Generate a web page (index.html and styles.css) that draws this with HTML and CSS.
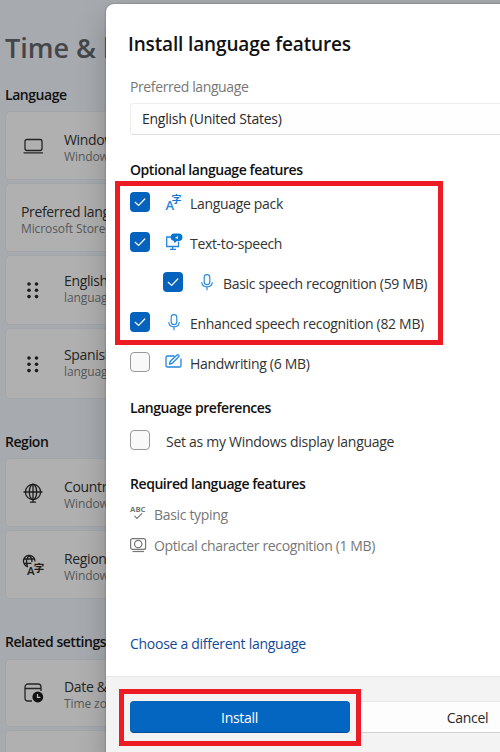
FILE: index.html
```html
<!DOCTYPE html>
<html lang="en">
<head>
<meta charset="utf-8">
<title>Install language features</title>
<link rel="stylesheet" href="styles.css">
</head>
<body>
<svg class="defs" width="0" height="0">
  <defs>
    <symbol id="check" viewBox="0 0 20 20"><path d="M5.2 10.3 8.6 13.5 14.8 7" fill="none" stroke="#fff" stroke-width="1.2" stroke-linecap="round"/></symbol>
    <symbol id="mic" viewBox="0 0 16 18"><g fill="none" stroke="#2a8be0" stroke-width="1.2" stroke-linecap="round"><rect x="5.2" y="1.6" width="5.6" height="10" rx="2.8"/><path d="M2.8 9.5c.3 2.800 2.500 4.300 5.200 4.300s4.900-1.500 5.200-4.300M8 14v2.800"/></g></symbol>
    <symbol id="dots" viewBox="0 0 14 18"><g fill="#1c1c1c"><circle cx="3" cy="3" r="1.800"/><circle cx="10.500" cy="3" r="1.800"/><circle cx="3" cy="9.300" r="1.800"/><circle cx="10.500" cy="9.300" r="1.800"/><circle cx="3" cy="15.600" r="1.800"/><circle cx="10.500" cy="15.600" r="1.800"/></g></symbol>
  </defs>
</svg>
<div class="window">
  <main class="settings">
    <h1 class="page-title">Time &amp; l</h1>
    <h2 class="section">Language</h2>
    <div class="card c1">
      <svg class="card-icon" viewBox="0 0 22 22"><g fill="none" stroke="#242424" stroke-width="1.300" stroke-linecap="round"><rect x="3" y="4.500" width="17" height="11" rx="2"/><path d="M2 17.800h18.500"/></g></svg>
      <div class="copy"><span class="name">Window</span><span class="detail">Window</span></div>
    </div>
    <div class="card c2 plain"><div class="copy"><span class="name">Preferred lang</span><span class="detail">Microsoft Store</span></div></div>
    <div class="card c3"><svg class="grip"><use href="#dots"/></svg><div class="copy"><span class="name">English</span><span class="detail">languag</span></div></div>
    <div class="card c4"><svg class="grip"><use href="#dots"/></svg><div class="copy"><span class="name">Spanish</span><span class="detail">languag</span></div></div>
    <h2 class="section region">Region</h2>
    <div class="card c5">
      <svg class="card-icon" viewBox="0 0 22 22"><g fill="none" stroke="#1c1c1c" stroke-width="1.300" stroke-linecap="round"><circle cx="11" cy="10" r="7.600"/><ellipse cx="11" cy="10" rx="3.700" ry="7.600"/><path d="M2 10h18M11 2v18M8.500 20.200h5"/></g></svg>
      <div class="copy"><span class="name">Countr</span><span class="detail">Window</span></div>
    </div>
    <div class="card c6">
      <svg class="card-icon" viewBox="0 0 22 22"><g fill="none" stroke="#1c1c1c" stroke-width="1.300"><path d="M6 12.800A5.800 5.800 0 1 1 13 7.500M5.500 12c-1.600-3-1.500-8 1.700-10.200C9.500 3 10 5 10 8M1.800 5h10.900M1.500 9.300h8"/></g><text class="latin" x="5" y="20.500" font-size="11.500" fill="#1c1c1c">A</text><text class="cjk" x="11.800" y="17.500" font-size="10.500" fill="#1c1c1c">字</text></svg>
      <div class="copy"><span class="name">Region</span><span class="detail">Window</span></div>
    </div>
    <h2 class="section related">Related settings</h2>
    <div class="card c7">
      <svg class="card-icon" viewBox="0 0 22 22"><path d="M10 19H6a3 3 0 0 1-3-3V5a3 3 0 0 1 3-3h10a3 3 0 0 1 3 3v4M3 6.500h16" fill="none" stroke="#242424" stroke-width="1.300"/><circle cx="15.800" cy="15" r="5.400" fill="#111"/><path d="M15.500 12v3.300h2.800" fill="none" stroke="#bbb" stroke-width="1.200"/></svg>
      <div class="copy"><span class="name">Date &amp;</span><span class="detail">Time zo</span></div>
    </div>
    <div class="card c8"></div>
  </main>

  <section class="dialog">
    <div class="body">
      <h2 class="title">Install language features</h2>
      <div class="label">Preferred language</div>
      <div class="select">English (United States)</div>
      <h3 class="head optional">Optional language features</h3>
      <div class="options">
        <div class="row"><span class="box on"><svg><use href="#check"/></svg></span>
          <svg class="icon" viewBox="0 0 18 18"><text class="latin" x="0.500" y="16.500" font-size="13" fill="#2185dd">A</text><text class="cjk" x="6.500" y="10" font-size="10" fill="#1478d0">字</text></svg>
          <span class="text">Language pack</span></div>
        <div class="row"><span class="box on"><svg><use href="#check"/></svg></span>
          <svg class="icon" viewBox="0 0 18 18"><path d="M7 4H1.700v9.500h11.800V8.500M7.600 13.500V16M5 16.300h6" fill="none" stroke="#2185dd" stroke-width="1.300"/><path d="M9.500 .5h4.200a3.700 3.700 0 0 1 0 7.600H12l-2.800 2.200V7.900A3.700 3.700 0 0 1 9.500 .5z" fill="#0874d1"/><path d="M10.500 4h1l1.400-1.300v3.500l-1.400-1h-1z" fill="#e5f3ff"/></svg>
          <span class="text">Text-to-speech</span></div>
        <div class="row nested"><span class="box on"><svg><use href="#check"/></svg></span><svg class="icon"><use href="#mic"/></svg><span class="text">Basic speech recognition (59 MB)</span></div>
        <div class="row"><span class="box on"><svg><use href="#check"/></svg></span><svg class="icon"><use href="#mic"/></svg><span class="text">Enhanced speech recognition (82 MB)</span></div>
        <div class="row"><span class="box"></span>
          <svg class="icon" viewBox="0 0 18 18"><g fill="none" stroke="#2185dd" stroke-width="1.300" stroke-linejoin="round"><path d="M9.500 3H2.500A1.500 1.500 0 0 0 1 4.500v8A1.500 1.500 0 0 0 2.500 14h12a1.500 1.500 0 0 0 1.500-1.500V5.500"/><path d="m4.500 11 .8-2.800L12 2q1.600-.8 2 .6.200.9-.5 1.500L7.200 10.300z"/></g></svg>
          <span class="text">Handwriting (6 MB)</span></div>
      </div>
      <h3 class="head prefs">Language preferences</h3>
      <div class="row display"><span class="box"></span><span class="text">Set as my Windows display language</span></div>
      <h3 class="head required">Required language features</h3>
      <div class="need"><svg class="need-icon" viewBox="0 0 18 18"><text class="latin abc" x="0" y="6.500" font-size="7.800" fill="#777">ABC</text><path d="m4.500 10.800 2.500 2.500 5-5" fill="none" stroke="#777" stroke-width="1.200"/></svg><span>Basic typing</span></div>
      <div class="need ocr"><svg class="need-icon" viewBox="0 0 18 18"><g fill="none" stroke="#777" stroke-width="1.200"><rect x=".6" y="2.600" width="15" height="10.800" rx="2"/><circle cx="8.200" cy="8" r="3.700"/><path d="M2.500 15.500h11.500"/></g></svg><span class="ocr-text">Optical character recognition (1 MB)</span></div>
      <a class="link">Choose a different language</a>
    </div>
    <footer class="footer"><button class="install">Install</button><button class="cancel">Cancel</button></footer>
  </section>
  <div class="mark mark-options"></div>
  <div class="mark mark-install"></div>
</div>
</body>
</html>
```
FILE: styles.css
```css
* { box-sizing: border-box; }
body { margin: 0; font-family: "Open Sans", "Noto Sans", sans-serif; font-size: 14px; }
h1, h2, h3 { margin: 0; }
.defs { position: absolute; }
.latin { font-family: "Open Sans", sans-serif; font-weight: 600; letter-spacing: 0; }
.abc { font-weight: 700; }
.cjk { font-family: "Noto Sans CJK SC", sans-serif; font-weight: 700; }
.window { position: relative; width: 500px; height: 752px; overflow: hidden; background: #a7aaaf; }

.settings { display: flex; flex-direction: column; width: 106px; height: 752px; padding-left: 5px; overflow: hidden; white-space: nowrap; }
.page-title { height: 37px; margin-top: 29px; font-size: 27px; line-height: 37px; font-weight: 600; letter-spacing: 0; color: #454649; }
.section { height: 20px; margin: 19px 0 6px; font-size: 14px; line-height: 20px; font-weight: 600; letter-spacing: -0.45px; color: #111; }
.region { margin-top: 30px; }
.related { margin-top: 30px; margin-bottom: 7px; }
.card { display: flex; align-items: center; flex: none; width: 480px; height: 69px; margin-bottom: 3px; padding-left: 16px; background: #b0b0b0; border: 1px solid #a2a5aa; border-radius: 5px; }
.c4 { height: 71px; }
.c3 { height: 70px; }
.c7 { height: 68px; }
.card-icon { width: 22px; height: 22px; flex: none; }
.grip { width: 14px; height: 18px; margin: 0 4px; flex: none; }
.copy { display: flex; flex-direction: column; margin-left: 20px; padding-top: 4px; }
.c3 .copy, .c4 .copy { padding-top: 0; margin-bottom: 2px; }
.plain { padding-left: 15px; }
.plain .copy { margin-left: 0; }
.name { font-size: 14px; line-height: 18px; letter-spacing: -0.35px; color: #242424; }
.detail { font-size: 12px; line-height: 16px; letter-spacing: -0.1px; color: #57585a; }

.dialog { position: absolute; left: 106px; top: 4px; width: 500px; height: 760px; display: flex; flex-direction: column; background: #fff; border-radius: 8px 0 0 0; box-shadow: 0 0 2px rgba(0,0,0,.4), 0 12px 30px rgba(0,0,0,.22); overflow: hidden; white-space: nowrap; }
.body { height: 672px; flex: none; padding: 26px 0 0 24px; display: flex; flex-direction: column; align-items: flex-start; letter-spacing: -0.32px; }
.title { height: 28px; margin-left: -2px; font-size: 19px; line-height: 28px; font-weight: 600; letter-spacing: -0.14px; color: #111; }
.label { height: 20px; margin-top: 19px; line-height: 20px; letter-spacing: -0.39px; color: #777; }
.select { width: 480px; height: 32px; margin-top: 6px; padding-left: 11px; line-height: 30px; background: #fefefe; border: 1px solid #eee; border-bottom-color: #ddd; border-radius: 4px; letter-spacing: -0.26px; color: #292929; }
.head { height: 20px; font-size: 14px; line-height: 20px; font-weight: 600; letter-spacing: -0.44px; color: #111; }
.optional { margin-top: 25px; }
.options { margin-top: 2px; }
.row { display: flex; align-items: center; height: 40px; color: #333; }
.nested { margin-left: 33px; }
.box { width: 20px; height: 20px; flex: none; border: 1px solid #999; border-radius: 4px; background: #f9f9f9; }
.box.on { border: 0; background: #0562bd; }
.box svg { display: block; width: 20px; height: 20px; }
.icon { width: 18px; height: 18px; margin-left: 15px; margin-right: 7px; }
.text { padding-top: 3px; }
.display { margin-top: 2px; letter-spacing: -0.28px; }
.display .text { margin-left: 16px; }
.prefs { margin-top: 16px; }
.required { margin-top: 14px; }
.need { display: flex; align-items: center; height: 20px; margin-top: 10px; color: #777; }
.ocr { margin-top: 11px; }
.ocr-text { letter-spacing: -0.37px; }
.need-icon { width: 18px; height: 18px; margin-right: 6px; }
.link { line-height: 20px; margin-top: 79px; letter-spacing: -0.28px; color: #124a98; }
.footer { flex: 1; display: flex; align-items: flex-start; gap: 8px; padding: 24px 0 0 24px; background: #f3f3f3; border-top: 1px solid #e8e8e8; }
button { width: 220px; height: 32px; flex: none; padding: 0 1px 0 0; border-radius: 4px; font: 14px "Open Sans", "Noto Sans", sans-serif; letter-spacing: -0.3px; }
.install { border: 1px solid #0562bd; border-bottom-color: #064e94; background: #0566c1; color: #fff; }
.cancel { border: 1px solid #e9e9e9; border-bottom-color: #d2d2d2; background: #fdfdfd; color: #292929; }
.mark { position: absolute; border: 5px solid #ed1c24; }
.mark-options { left: 115px; top: 181px; width: 328px; height: 164px; }
.mark-install { left: 119px; top: 689px; width: 242px; height: 57px; }
```
